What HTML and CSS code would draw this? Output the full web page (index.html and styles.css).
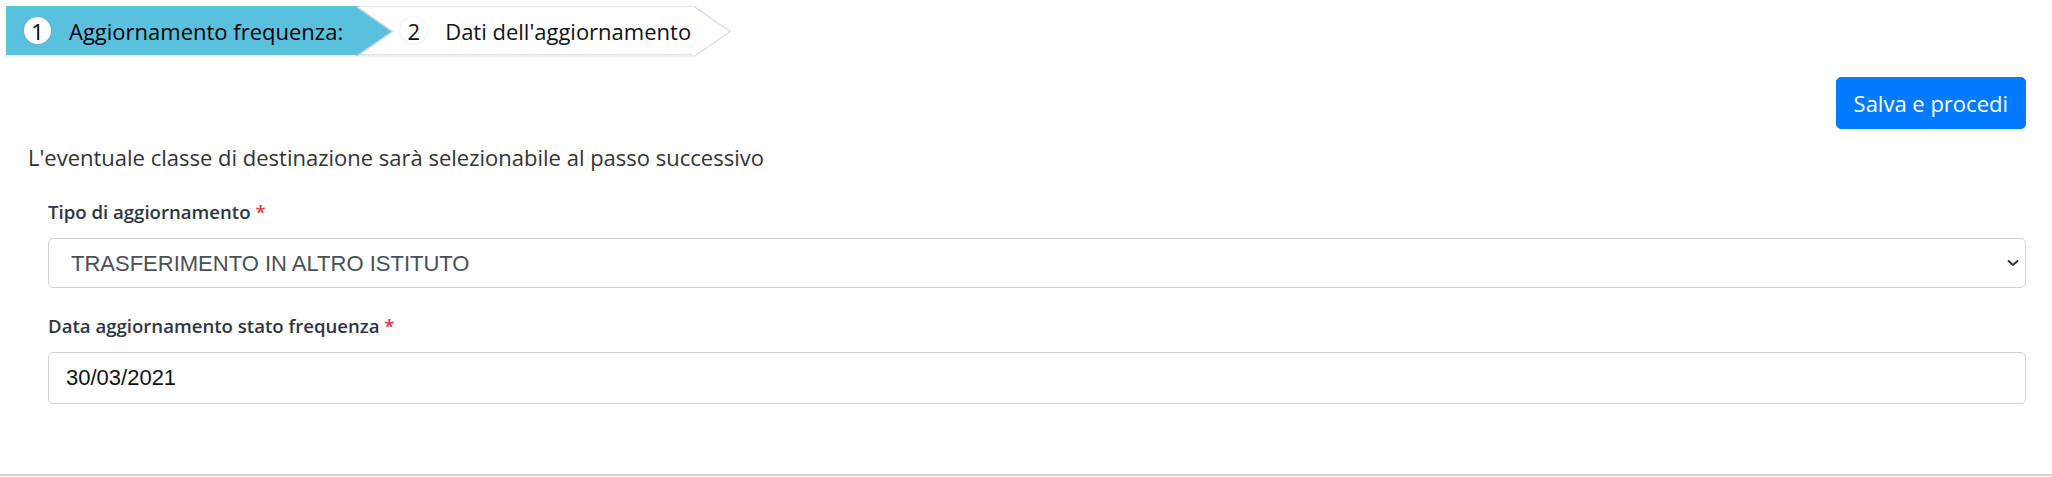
FILE: index.html
```html
<!DOCTYPE html>
<html lang="it">
<head>
    <meta charset="UTF-8">
    <meta name="viewport" content="width=device-width, initial-scale=1.0">
    <title>Aggiornamento frequenza</title>
    <link rel="stylesheet" href="styles.css">
</head>
<body>
    <div class="page">
        <nav class="steps">
            <div class="step step-active">
                <span class="step-num">1</span>
                <span class="step-label">Aggiornamento frequenza:</span>
            </div>
            <div class="step">
                <span class="step-num">2</span>
                <span class="step-label">Dati dell'aggiornamento</span>
            </div>
        </nav>
        <div class="content">
            <div class="actions">
                <button type="button" class="btn-primary">Salva e procedi</button>
            </div>
            <p class="hint">L'eventuale classe di destinazione sarà selezionabile al passo successivo</p>
            <form class="fields">
                <div class="group">
                    <label for="tipo">Tipo di aggiornamento <span class="req">*</span></label>
                    <div class="select-wrap">
                        <select id="tipo" class="control">
                            <option>TRASFERIMENTO IN ALTRO ISTITUTO</option>
                        </select>
                        <svg class="chevron" width="12" height="8" viewBox="0 0 12 8">
                            <path d="M1 1.5 L6 6 L11 1.5" fill="none" stroke="#333" stroke-width="2"/>
                        </svg>
                    </div>
                </div>
                <div class="group">
                    <label for="data">Data aggiornamento stato frequenza <span class="req">*</span></label>
                    <input type="text" id="data" class="control control-date" value="30/03/2021">
                </div>
            </form>
        </div>
    </div>
</body>
</html>
```
FILE: styles.css
```css
body {
    margin: 0;
    font-family: "Open Sans", Arial, sans-serif;
    color: #333;
    background: #fff;
}
.page {
    box-sizing: border-box;
    height: 470px;
    border-bottom: 2px solid #d4d4d4;
}
.steps {
    display: flex;
    margin: 6px 0 0 6px;
}
.step {
    position: relative;
    z-index: 1;
    display: flex;
    align-items: center;
    height: 47px;
    background: #fff;
    border-top: 1px solid #e2e2e2;
    border-bottom: 1px solid #e2e2e2;
    box-shadow: 0 2px 2px rgba(0, 0, 0, 0.08);
    padding: 0 5px 0 42px;
    font-size: 22px;
    color: #111;
}
.step::after {
    content: "";
    position: absolute;
    z-index: -1;
    top: 7px;
    right: -17px;
    width: 34px;
    height: 34px;
    background: inherit;
    border-top: 1px solid #dadada;
    border-right: 1px solid #dadada;
    transform: scaleX(1.45) rotate(45deg);
}
.step-active {
    z-index: 2;
    background: #5bc0de;
    border-color: #5bc0de;
    padding: 0 15px 0 18px;
    color: #000;
}
.step-num {
    display: inline-flex;
    align-items: center;
    justify-content: center;
    width: 27px;
    height: 27px;
    border-radius: 50%;
    background: #fff;
    box-shadow: 0 0 2px rgba(0, 0, 0, 0.15);
    margin-right: 18px;
    font-size: 22px;
}
.content {
    padding: 0 26px;
}
.actions {
    display: flex;
    justify-content: flex-end;
    margin-top: 22px;
}
.btn-primary {
    font-family: "Open Sans", Arial, sans-serif;
    font-size: 22px;
    color: #fff;
    background-color: #007bff;
    border: 1px solid #007bff;
    border-radius: 5px;
    height: 52px;
    padding: 0 17px;
    cursor: pointer;
}
.hint {
    margin: 12px 0 23px 0;
    padding-left: 2px;
    font-size: 22px;
    line-height: 32px;
}
.fields {
    padding-left: 22px;
}
.group {
    margin-bottom: 22px;
}
.group label {
    display: block;
    font-size: 18.6px;
    line-height: 32px;
    font-weight: 600;
    color: #2f3542;
    margin-bottom: 10px;
}
.req {
    color: #dc3545;
}
.select-wrap {
    position: relative;
}
.control {
    display: block;
    width: 100%;
    box-sizing: border-box;
    height: 50px;
    padding: 0 22px;
    font-family: "Liberation Sans", Arial, sans-serif;
    font-size: 22px;
    color: #495057;
    background: #fff;
    border: 1px solid #ced4da;
    border-radius: 5px;
    appearance: none;
}
.control-date {
    height: 52px;
    padding: 0 17px;
    color: #111;
}
.chevron {
    position: absolute;
    right: 7px;
    top: 21px;
}
```
